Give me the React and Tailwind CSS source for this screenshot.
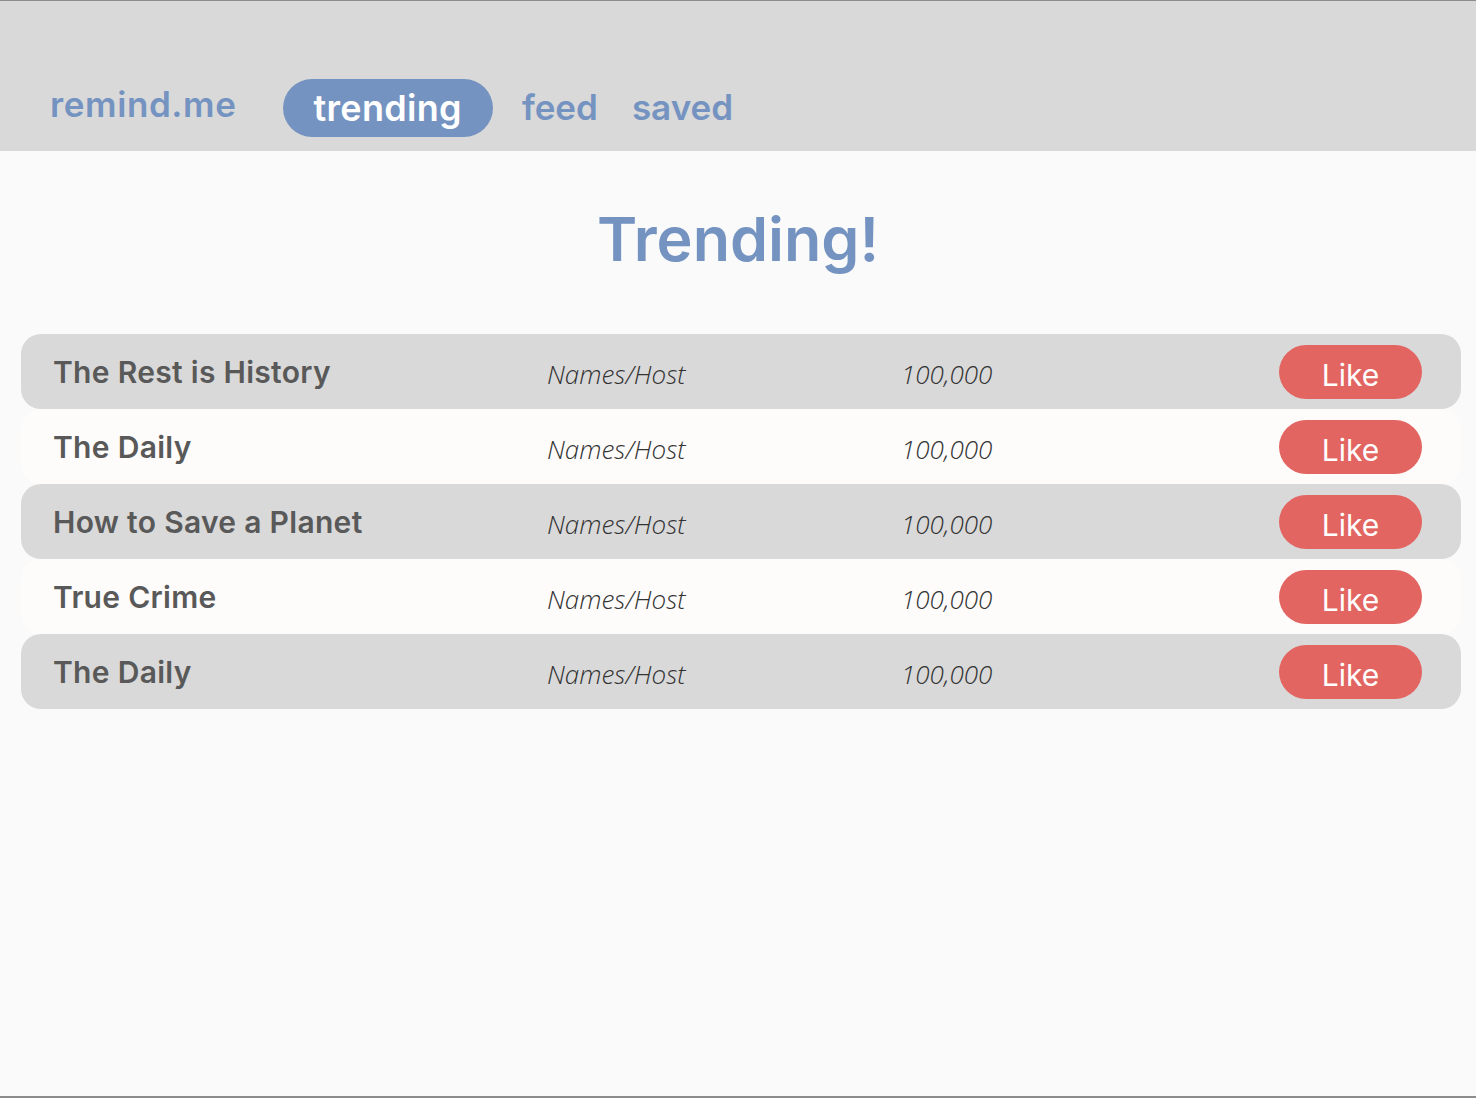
import { useState } from "react";

const shows = [
  { title: "The Rest is History", host: "Names/Host", likes: "100,000" },
  { title: "The Daily", host: "Names/Host", likes: "100,000" },
  { title: "How to Save a Planet", host: "Names/Host", likes: "100,000" },
  { title: "True Crime", host: "Names/Host", likes: "100,000" },
  { title: "The Daily", host: "Names/Host", likes: "100,000" },
];

const tabs = [
  { id: "trending", gap: "ml-0" },
  { id: "feed", gap: "ml-[29px]" },
  { id: "saved", gap: "ml-[34px]" },
];

export default function App() {
  const [active, setActive] = useState("trending");

  return (
    <div className="h-[1098px] flex flex-col bg-[#fafafa] border-t border-b-2 border-[#8c8c8c] font-['Inter',sans-serif] overflow-hidden">
      <header className="h-[150px] bg-[#d9d9d9] flex items-end pb-[14px] pl-[50px]">
        <span className="text-[35px] font-semibold text-[#7593c1] leading-none mb-[15px] tracking-[0.6px]">remind.me</span>
        <nav className="flex items-center ml-[46px]">
          {tabs.map((t) => (
            <button
              key={t.id}
              onClick={() => setActive(t.id)}
              className={
                active === t.id
                  ? t.gap + " h-[58px] px-[31px] rounded-full bg-[#7593c1] text-white text-[36px] font-semibold leading-none pb-[1px] tracking-[0.3px]"
                  : t.gap + " h-[58px] rounded-full text-[#7593c1] text-[35px] font-semibold leading-none pb-[1px]"
              }
            >
              {t.id}
            </button>
          ))}
        </nav>
      </header>

      <main className="flex flex-col">
        <h1 className="text-center text-[61px] font-semibold text-[#7593c1] mt-[58px] leading-none">Trending!</h1>

        <div className="flex flex-col mt-[64px] mx-[21px] mr-[15px]">
          {shows.map((s, i) => (
            <div
              key={i}
              className={
                (i % 2 === 0 ? "bg-[#d9d9d9]" : "bg-[#fdfcfb]") +
                " h-[75px] rounded-[20px] flex items-center pl-[32px] pr-[39px]"
              }
            >
              <span className="w-[494px] text-[30px] font-semibold text-[#595959] leading-none tracking-[0.3px] pt-[1px]">{s.title}</span>
              <span className="w-[354px] text-[26px] italic font-light text-[#333] leading-none font-['Open_Sans',sans-serif] pt-[5px]">{s.host}</span>
              <span className="flex-1 text-[26px] italic font-light text-[#333] leading-none font-['Open_Sans',sans-serif] pt-[5px]">{s.likes}</span>
              <button className="w-[143px] h-[54px] rounded-full bg-[#e26562] text-white text-[30px] leading-none pt-[6px]">Like</button>
            </div>
          ))}
        </div>
      </main>
    </div>
  );
}
